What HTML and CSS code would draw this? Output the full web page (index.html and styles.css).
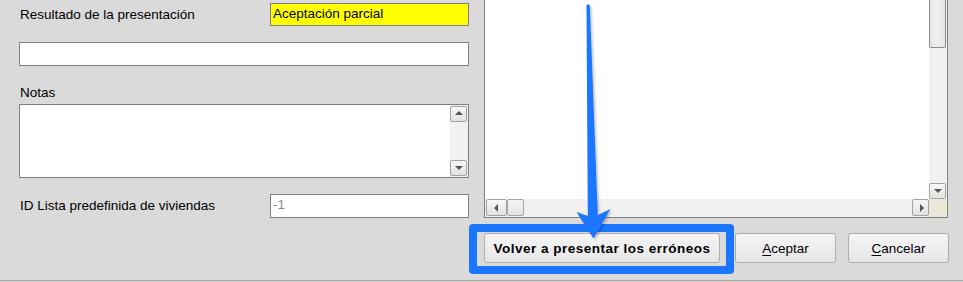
FILE: index.html
```html
<!DOCTYPE html>
<html lang="es">
<head>
<meta charset="utf-8">
<title>Resultado de la presentación</title>
<link rel="stylesheet" href="styles.css">
</head>
<body>
<div class="page">
  <div class="left">
    <div class="row r1">
      <span class="label">Resultado de la presentación</span>
      <div class="field short yellow">Aceptación parcial</div>
    </div>
    <div class="field wide"></div>
    <div class="label notas">Notas</div>
    <div class="textarea">
      <div class="ta-text"></div>
      <div class="vbar">
        <div class="sbtn up"></div>
        <div class="track"></div>
        <div class="sbtn down"></div>
      </div>
    </div>
    <div class="row r4">
      <span class="label">ID Lista predefinida de viviendas</span>
      <div class="field short disabled">-1</div>
    </div>
  </div>
  <div class="right">
    <div class="listbox">
      <div class="lb-content"></div>
      <div class="lb-vbar">
        <div class="thumb-v"></div>
        <div class="track"></div>
        <div class="sbtn down"></div>
      </div>
      <div class="lb-hbar">
        <div class="sbtn left"></div>
        <div class="thumb-h"></div>
        <div class="track"></div>
        <div class="sbtn right"></div>
      </div>
      <div class="corner"></div>
    </div>
    <div class="buttons">
      <button class="btn main">Volver a presentar los erróneos</button>
      <button class="btn ok"><u>A</u>ceptar</button>
      <button class="btn cancel"><u>C</u>ancelar</button>
    </div>
  </div>
  <div class="highlight"></div>
  <svg class="arrow" width="963" height="282" viewBox="0 0 963 282">
    <defs>
      <filter id="sh" x="-50%" y="-10%" width="200%" height="120%">
        <feDropShadow dx="1.5" dy="1.5" stdDeviation="1.2" flood-color="#000" flood-opacity="0.25"/>
      </filter>
    </defs>
    <polygon filter="url(#sh)" fill="#1a76ff" points="586.5,5.5 588,4 589.8,5.5 597.8,215 610.5,209 593.5,238.5 576.5,212 587.8,216"/>
  </svg>
</div>
</body>
</html>
```
FILE: styles.css
```css
* { box-sizing: border-box; }
html, body { margin: 0; padding: 0; }
body {
  width: 963px;
  height: 282px;
  overflow: hidden;
  background: #dadada;
  font-family: "Liberation Sans", Arial, sans-serif;
  font-size: 13.5px;
  color: #000;
}
.page {
  position: relative;
  display: flex;
  width: 963px;
  height: 281px;
  border-bottom: 1px solid #a3a3a3;
}
.left {
  width: 484px;
  padding: 3px 0 0 19px;
  display: flex;
  flex-direction: column;
}
.row {
  display: flex;
  align-items: center;
  justify-content: space-between;
  width: 450px;
}
.label {
  line-height: 16px;
  white-space: nowrap;
  padding-left: 1px;
}
.field {
  border: 1px solid #7f7f7f;
  background: #fff;
  line-height: 20px;
  padding-left: 2px;
  white-space: nowrap;
}
.short { width: 199px; height: 23px; }
.r4 .short { height: 24px; }
.yellow { background: #ffff00; }
.disabled { color: #8c8c84; }
.wide {
  width: 450px;
  height: 24px;
  margin-top: 16px;
}
.notas { margin-top: 19px; }
.textarea {
  margin-top: 3px;
  width: 450px;
  height: 74px;
  border: 1px solid #7f7f7f;
  background: #fff;
  display: flex;
}
.ta-text { flex: 1; }
.vbar {
  width: 18px;
  display: flex;
  flex-direction: column;
  background: #f1f1f1;
  padding: 1px 1px 1px 0;
}
.track { flex: 1; background: #f1f1f1; }
.r4 { margin-top: 16px; }

.sbtn {
  position: relative;
  width: 17px;
  height: 16px;
  border: 1px solid #a2a2a2;
  border-radius: 2px;
  background: linear-gradient(#f7f7f7, #e2e2e2);
  flex: none;
}
.sbtn::after {
  content: "";
  position: absolute;
  left: 50%;
  top: 50%;
  width: 0;
  height: 0;
}
.sbtn.up::after {
  margin: -3px 0 0 -4px;
  border-left: 4px solid transparent;
  border-right: 4px solid transparent;
  border-bottom: 4px solid #555;
}
.sbtn.down::after {
  margin: -2px 0 0 -4px;
  border-left: 4px solid transparent;
  border-right: 4px solid transparent;
  border-top: 4px solid #555;
}
.sbtn.left::after {
  margin: -4px 0 0 -3px;
  border-top: 4px solid transparent;
  border-bottom: 4px solid transparent;
  border-right: 4px solid #555;
}
.sbtn.right::after {
  margin: -4px 0 0 -1px;
  border-top: 4px solid transparent;
  border-bottom: 4px solid transparent;
  border-left: 4px solid #555;
}

.right {
  width: 465px;
  display: flex;
  flex-direction: column;
}
.listbox {
  width: 464px;
  height: 218px;
  border: 1px solid #7f7f7f;
  border-top: none;
  background: #fff;
  display: grid;
  grid-template-columns: 444px 18px;
  grid-template-rows: 199px 18px;
}
.lb-content { background: #fff; }
.lb-vbar {
  display: flex;
  flex-direction: column;
  background: #f2f2f2;
  padding-right: 1px;
}
.thumb-v {
  height: 48px;
  border: 1px solid #8a8a8a;
  border-top: none;
  border-radius: 0 0 2px 2px;
  background: linear-gradient(90deg, #e4e4e4, #efefef 45%, #e4e4e4);
}
.lb-vbar .sbtn.down { height: 16px; margin-bottom: 0; }
.lb-hbar {
  display: flex;
  background: #f2f2f2;
  padding: 0 0 1px 1px;
}
.lb-hbar .sbtn { width: 17px; height: 17px; }
.thumb-h {
  width: 17px;
  height: 17px;
  border: 1px solid #a8a8a8;
  border-radius: 2px;
  background: linear-gradient(#f4f4f4, #e4e4e4);
}
.corner { background: #ebe8da; }

.buttons {
  display: flex;
  margin-top: 15px;
}
.btn {
  height: 30px;
  border: 1px solid #adadad;
  border-radius: 3px;
  background: linear-gradient(#f5f5f5, #e6e6e6);
  font-family: "Liberation Sans", Arial, sans-serif;
  font-size: 13.5px;
  color: #000;
  padding: 0;
  text-align: center;
}
.btn u { text-underline-offset: 2px; }
.main {
  width: 236px;
  margin-right: 15px;
  font-weight: bold;
  letter-spacing: 0.5px;
}
.ok { width: 101px; margin-right: 12px; }
.cancel { width: 101px; }

.highlight {
  position: absolute;
  left: 469px;
  top: 224px;
  width: 265px;
  height: 50px;
  border: 8px solid #1a76ff;
  border-radius: 4px;
}
.arrow {
  position: absolute;
  left: 0;
  top: 0;
  pointer-events: none;
}
```
